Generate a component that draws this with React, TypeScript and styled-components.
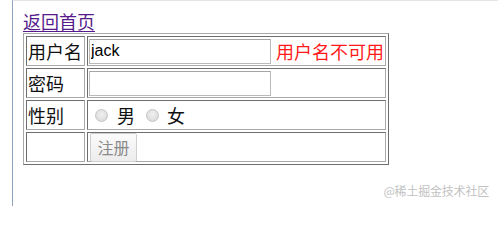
import React from "react";
import styled, { createGlobalStyle } from "styled-components";

const Global = createGlobalStyle`
  html, body { margin: 0; padding: 0; background: #fff; }
  body { font-family: "Liberation Sans", "Noto Sans CJK SC", sans-serif; }
`;

const Page = styled.div`
  position: relative;
  width: 498px;
  height: 206px;
  overflow: hidden;
`;

const Frame = styled.div`
  margin-left: 12px;
  height: 197px;
  border-left: 1px solid #8ea4bd;
  border-top: 1px solid #e4e4e4;
  padding: 8px 0 0 10px;
`;

const HomeLink = styled.a`
  display: block;
  width: max-content;
  height: 24px;
  line-height: 24px;
  font-family: "Noto Sans CJK SC", sans-serif;
  font-size: 18px;
  color: #551a8b;
  text-decoration: underline;
  text-underline-offset: 2px;
`;

const FormTable = styled.table`
  border-collapse: separate;
  border-spacing: 2px;
  border: 1px solid;
  border-color: #a8a8a8 #6e6e6e #6e6e6e #a8a8a8;
  font-family: "Noto Sans CJK SC", sans-serif;
  font-size: 18px;
  margin: 0;
`;

const Cell = styled.td<{ $w: number }>`
  width: ${(p) => p.$w}px;
  box-sizing: border-box;
  padding: 1px;
  border: 1px solid;
  border-color: #6e6e6e #a8a8a8 #a8a8a8 #6e6e6e;
  vertical-align: middle;
  color: #111;
  white-space: nowrap;
`;

const CellBody = styled.div`
  display: flex;
  align-items: center;
  height: 26px;
  line-height: 24px;
`;

const TextInput = styled.input`
  box-sizing: border-box;
  width: 182px;
  height: 25px;
  margin: 0;
  padding: 1px 1px;
  border: 1px solid #b9b9b9;
  border-top-color: #a5a5a5;
  font-family: "Liberation Sans", sans-serif;
  font-size: 16px;
  color: #000;
  outline: none;
`;

const ErrorText = styled.span`
  margin-left: 5px;
  color: #ff1a1a;
`;

const Radio = styled.input<{ $ml: number }>`
  appearance: none;
  width: 13px;
  height: 13px;
  margin: 0 0 0 ${(p) => p.$ml}px;
  border-radius: 50%;
  border: 1px solid #c4c4c4;
  background: radial-gradient(circle at 50% 40%, #f0f0f0 0%, #d6d6d6 100%);
  box-sizing: border-box;
`;

const RadioLabel = styled.span<{ $gapL: number; $gapR: number }>`
  margin-left: ${(p) => p.$gapL}px;
  margin-right: ${(p) => p.$gapR}px;
  color: #111;
`;

const SubmitButton = styled.button`
  box-sizing: border-box;
  width: 47px;
  height: 29px;
  margin: 0 0 0 1px;
  padding: 0;
  border: 1px solid #cfcfcf;
  border-radius: 2px;
  background: linear-gradient(#fbfbfb, #ececec);
  font-family: "Noto Sans CJK SC", sans-serif;
  font-size: 16px;
  color: #8a8a8a;
`;

const Watermark = styled.div`
  position: absolute;
  right: 9px;
  bottom: 8px;
  font-family: "Noto Sans CJK SC", sans-serif;
  font-size: 12px;
  line-height: 14px;
  color: #c2c2c2;
  letter-spacing: -0.2px;
`;

export default function App() {
  return (
    <Page>
      <Global />
      <Frame>
        <HomeLink href="#">返回首页</HomeLink>
        <FormTable>
          <tbody>
            <tr>
              <Cell $w={59}>
                <CellBody>用户名</CellBody>
              </Cell>
              <Cell $w={297}>
                <CellBody>
                  <TextInput defaultValue="jack" />
                  <ErrorText>用户名不可用</ErrorText>
                </CellBody>
              </Cell>
            </tr>
            <tr>
              <Cell $w={59}>
                <CellBody>密码</CellBody>
              </Cell>
              <Cell $w={297}>
                <CellBody>
                  <TextInput type="password" />
                </CellBody>
              </Cell>
            </tr>
            <tr>
              <Cell $w={59}>
                <CellBody>性别</CellBody>
              </Cell>
              <Cell $w={297}>
                <CellBody>
                  <Radio type="radio" name="sex" $ml={6} />
                  <RadioLabel $gapL={9} $gapR={11}>男</RadioLabel>
                  <Radio type="radio" name="sex" $ml={0} />
                  <RadioLabel $gapL={8} $gapR={0}>女</RadioLabel>
                </CellBody>
              </Cell>
            </tr>
            <tr>
              <Cell $w={59}>
                <CellBody />
              </Cell>
              <Cell $w={297}>
                <CellBody>
                  <SubmitButton>注册</SubmitButton>
                </CellBody>
              </Cell>
            </tr>
          </tbody>
        </FormTable>
      </Frame>
      <Watermark>@稀土掘金技术社区</Watermark>
    </Page>
  );
}
